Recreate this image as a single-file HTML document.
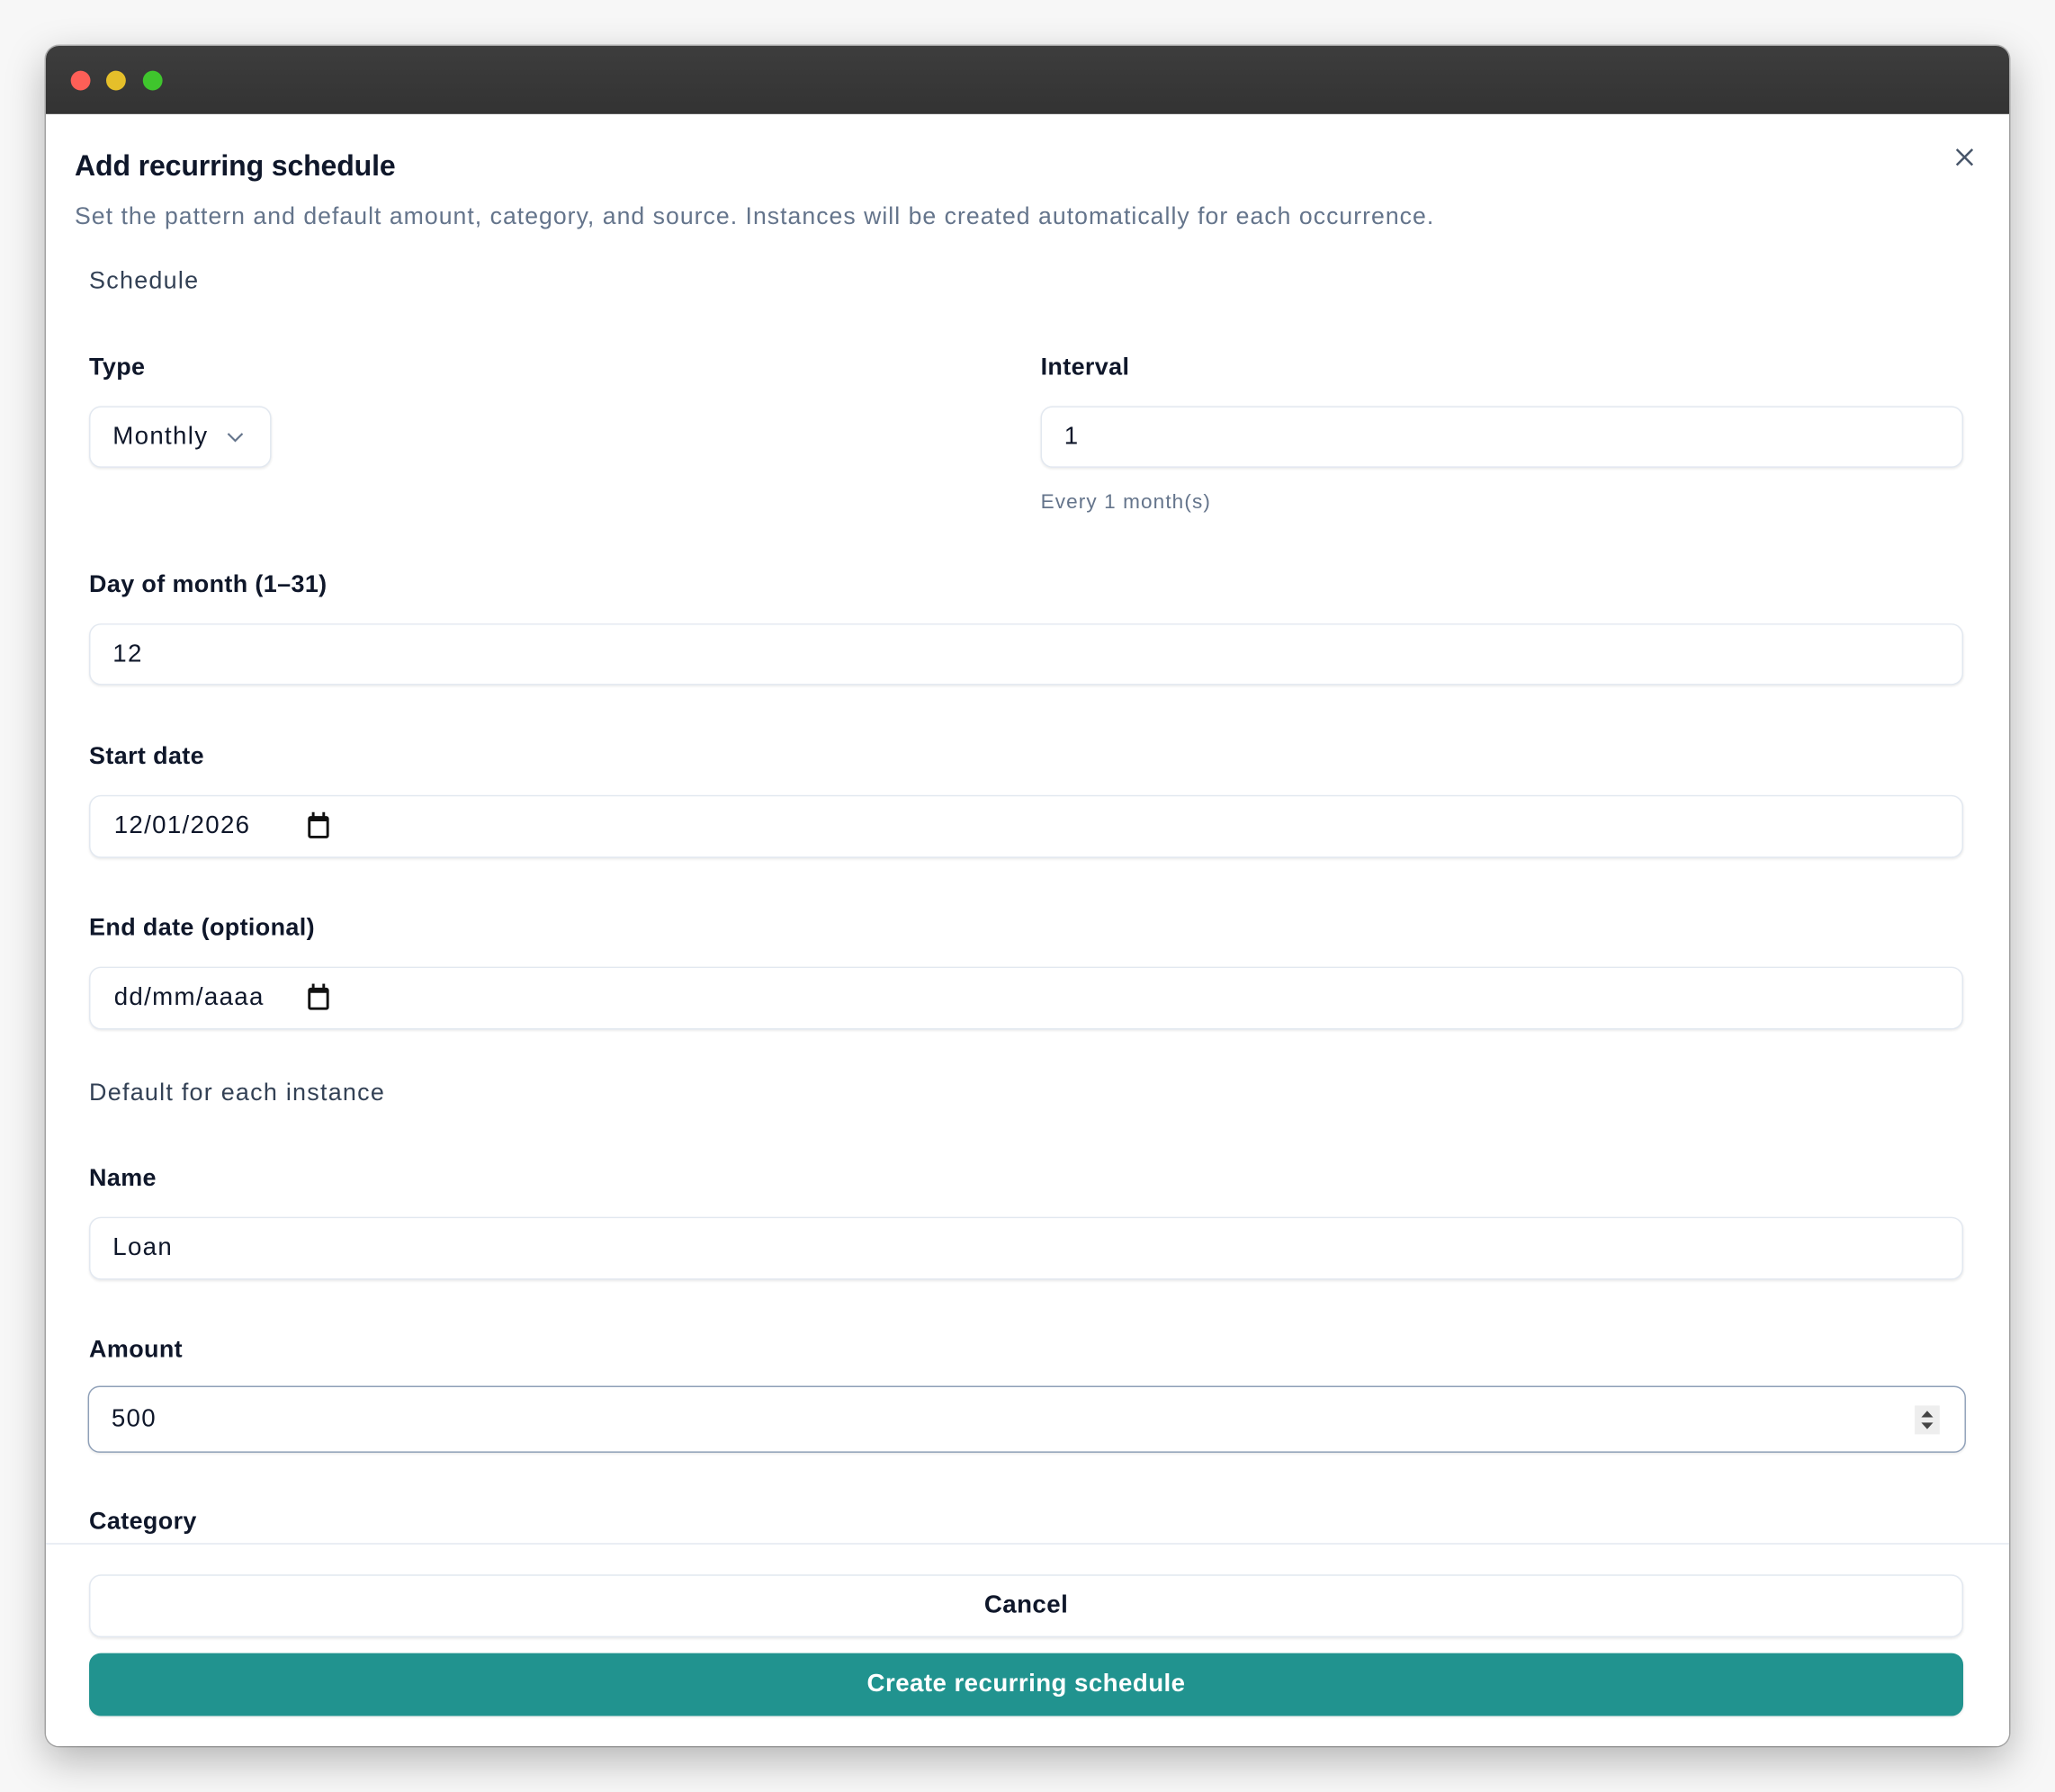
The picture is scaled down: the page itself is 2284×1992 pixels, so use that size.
<!DOCTYPE html>
<html><head><meta charset="utf-8"><style>
*{box-sizing:border-box;margin:0;padding:0}
html,body{width:2284px;height:1992px;overflow:hidden;background:#f7f7f7;font-family:"Liberation Sans",sans-serif}
#s{position:absolute;left:0;top:0;width:1568px;height:1368px;transform:scale(1.45663,1.4561);transform-origin:0 0}
.win{position:absolute;left:35px;top:35px;width:1498px;height:1298px;background:#fff;border-radius:10px;overflow:hidden;box-shadow:0 10px 30px rgba(0,0,0,.28),0 0 0 1px rgba(0,0,0,.25)}
.tb{position:absolute;left:0;top:0;right:0;height:52px;background:linear-gradient(#3d3d3d,#333);border-bottom:1px solid #111}
.dot{position:absolute;top:19px;width:15px;height:15px;border-radius:50%}
.a{position:absolute;white-space:nowrap}
.t{left:22px;top:79px;font-size:22px;font-weight:bold;color:#0f172a;letter-spacing:-0.1px}
.sub{left:22px;top:119px;font-size:18.3px;color:#64748b;letter-spacing:0.7px}
.sec{font-size:18.5px;color:#334155;letter-spacing:0.85px}
.lab{font-size:18.5px;font-weight:bold;color:#0f172a;letter-spacing:0.25px}
.in{position:absolute;border:1px solid #e2e8f0;border-radius:9px;box-shadow:0 1px 2px rgba(0,0,0,.08);background:#fff;font-size:19px;color:#0f172a;padding-left:17px;display:flex;align-items:center;letter-spacing:0.9px}
.cal{position:absolute;left:166px;top:15px;width:16px;height:17px;border:2px solid #111;border-top-width:4px;border-radius:2px}
.cal:before,.cal:after{content:"";position:absolute;top:-7px;width:2px;height:4px;background:#111}
.cal:before{left:1px}.cal:after{right:1px}
</style></head><body><div id="s">
<div class="win">
<div class="tb"><div class="dot" style="left:19px;background:#fe5f57"></div><div class="dot" style="left:46px;background:#e5bf2a"></div><div class="dot" style="left:74px;background:#3fc52d"></div></div>
<div class="a t">Add recurring schedule</div>
<svg class="a" style="left:1457px;top:78px" width="14" height="14" viewBox="0 0 14 14"><path d="M1 1L13 13M13 1L1 13" stroke="#475569" stroke-width="1.7"/></svg>
<div class="a sub">Set the pattern and default amount, category, and source. Instances will be created automatically for each occurrence.</div>
<div class="a sec" style="left:33px;top:168px">Schedule</div>
<div class="a lab" style="left:33px;top:234px">Type</div>
<div class="a lab" style="left:759px;top:234px">Interval</div>
<div class="in" style="left:33px;top:275px;width:139px;height:47px">Monthly<svg style="margin-left:14px" width="13" height="8" viewBox="0 0 13 8"><path d="M1 1l5.5 5.5L12 1" stroke="#64748b" stroke-width="1.5" fill="none"/></svg></div>
<div class="in" style="left:759px;top:275px;width:704px;height:47px">1</div>
<div class="a" style="left:759px;top:340px;font-size:15.5px;color:#64748b;letter-spacing:0.75px">Every 1 month(s)</div>
<div class="a lab" style="left:33px;top:400px">Day of month (1–31)</div>
<div class="in" style="left:33px;top:441px;width:1430px;height:47px">12</div>
<div class="a lab" style="left:33px;top:531px">Start date</div>
<div class="in" style="left:33px;top:572px;width:1430px;height:48px;padding-left:18px">12/01/2026<div class="cal"></div></div>
<div class="a lab" style="left:33px;top:662px">End date (optional)</div>
<div class="in" style="left:33px;top:703px;width:1430px;height:48px;padding-left:18px">dd/mm/aaaa<div class="cal"></div></div>
<div class="a sec" style="left:33px;top:788px">Default for each instance</div>
<div class="a lab" style="left:33px;top:853px">Name</div>
<div class="in" style="left:33px;top:894px;width:1430px;height:48px">Loan</div>
<div class="a lab" style="left:33px;top:984px">Amount</div>
<div class="in" style="left:32px;top:1023px;width:1433px;height:51px;border:1.5px solid #8fa0b8">500
<div style="position:absolute;right:19px;top:14px;width:19px;height:22px;background:#eee"><svg width="19" height="22" viewBox="0 0 19 22"><path d="M5 9l4.5-5 4.5 5zM5 13l4.5 5 4.5-5z" fill="#444"/></svg></div></div>
<div class="a lab" style="left:33px;top:1115px">Category</div>
<div style="position:absolute;left:0;right:0;top:1143px;height:155px;background:#fff;border-top:1px solid #e2e8f0"></div>
<div class="in" style="left:33px;top:1167px;width:1430px;height:48px;justify-content:center;padding:0;font-weight:bold;font-size:19px;letter-spacing:0.3px">Cancel</div>
<div class="in" style="left:33px;top:1227px;width:1430px;height:48px;justify-content:center;padding:0;background:#21938f;border-color:#21938f;color:#fff;font-weight:bold;font-size:19px;letter-spacing:0.3px">Create recurring schedule</div>
</div>
</div></body></html>
